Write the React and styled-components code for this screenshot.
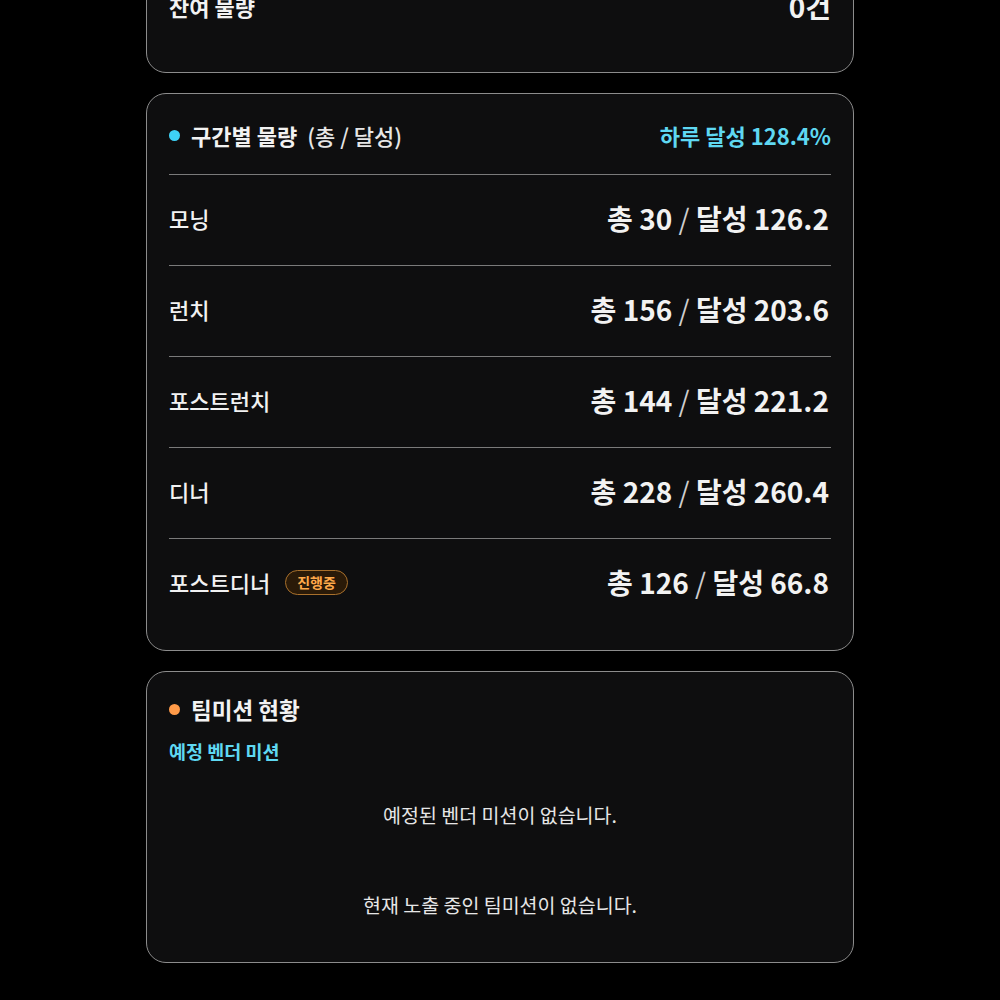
import styled, { createGlobalStyle } from "styled-components";

const GlobalStyle = createGlobalStyle({
  "html, body": {
    margin: 0,
    padding: 0,
    background: "#000",
  },
  body: {
    fontFamily: '"Noto Sans CJK KR", "Noto Sans", sans-serif',
    color: "#f2f2f2",
  },
});

const segments = [
  { name: "모닝", total: 30, done: "126.2" },
  { name: "런치", total: 156, done: "203.6" },
  { name: "포스트런치", total: 144, done: "221.2" },
  { name: "디너", total: 228, done: "260.4" },
  { name: "포스트디너", total: 126, done: "66.8", live: true },
];

const App = () => {
  return (
    <>
      <GlobalStyle />
      <Page>
        <Card $top="-42px" $bottom="41px">
          <SummaryRow>
            <span>잔여 물량</span>
            <strong>0건</strong>
          </SummaryRow>
        </Card>

        <Card $bottom="21px">
          <Header>
            <Title>
              <Dot $color="#3ed2f6" />
              구간별 물량 <small>(총 / 달성)</small>
            </Title>
            <Rate>하루 달성 128.4%</Rate>
          </Header>
          {segments.map((s) => (
            <Row key={s.name}>
              <Label>
                {s.name}
                {s.live && <Badge>진행중</Badge>}
              </Label>
              <Value>
                총 {s.total} <Slash>/</Slash> 달성 {s.done}
              </Value>
            </Row>
          ))}
        </Card>

        <Card $bottom="13px">
          <MissionTitle>
            <Dot $color="#ff9a48" />
            팀미션 현황
          </MissionTitle>
          <SubTitle>예정 벤더 미션</SubTitle>
          <Empty $first>예정된 벤더 미션이 없습니다.</Empty>
          <Empty>현재 노출 중인 팀미션이 없습니다.</Empty>
        </Card>
      </Page>
    </>
  );
};

const Page = styled.div({
  width: "708px",
  margin: "0 auto",
  display: "flex",
  flexDirection: "column",
  gap: "20px",
  paddingBottom: "40px",
});

const Card = styled.section(({ $top, $bottom }) => ({
  marginTop: $top || 0,
  background: "#0e0e0f",
  border: "1px solid #8c8c8c",
  borderRadius: "20px",
  padding: `22px 22px ${$bottom || "22px"}`,
}));

const SummaryRow = styled.div({
  display: "flex",
  justifyContent: "space-between",
  alignItems: "center",
  height: "50px",
  span: {
    fontSize: "22px",
    fontWeight: 700,
  },
  strong: {
    fontSize: "28px",
    fontWeight: 700,
  },
});

const Header = styled.div({
  display: "flex",
  justifyContent: "space-between",
  alignItems: "center",
  height: "38px",
  paddingBottom: "20px",
  borderBottom: "1px solid #7a7a7a",
});

const Title = styled.h2({
  margin: 0,
  display: "flex",
  alignItems: "center",
  fontSize: "22px",
  fontWeight: 700,
  whiteSpace: "pre",
  small: {
    fontSize: "22px",
    fontWeight: 500,
    color: "#e6e6e6",
    marginLeft: "5px",
  },
});

const Dot = styled.span(({ $color }) => ({
  width: "11px",
  height: "11px",
  borderRadius: "50%",
  background: $color,
  marginRight: "11px",
  flexShrink: 0,
}));

const Rate = styled.span({
  fontSize: "22px",
  fontWeight: 700,
  color: "#5fd8f2",
});

const Row = styled.div({
  display: "flex",
  justifyContent: "space-between",
  alignItems: "center",
  height: "86px",
  paddingBottom: "4px",
  borderBottom: "1px solid #7a7a7a",
  "&:last-child": {
    borderBottom: "none",
  },
});

const Label = styled.span({
  display: "flex",
  alignItems: "center",
  gap: "15px",
  fontSize: "22px",
  fontWeight: 500,
});

const Badge = styled.span({
  fontSize: "14px",
  fontWeight: 700,
  color: "#ffa94a",
  background: "#2a1a08",
  border: "1px solid #a8702c",
  borderRadius: "13px",
  padding: "1px 11px 2px",
  lineHeight: "20px",
});

const Value = styled.span({
  fontSize: "28px",
  fontWeight: 700,
  marginRight: "2px",
});

const Slash = styled.span({
  fontWeight: 400,
  color: "#cfcfcf",
});

const MissionTitle = styled.h2({
  margin: 0,
  display: "flex",
  alignItems: "center",
  height: "30px",
  fontSize: "22.5px",
  fontWeight: 700,
});

const SubTitle = styled.h3({
  margin: "14px 0 0",
  fontSize: "18.5px",
  fontWeight: 700,
  color: "#5fd8f2",
});

const Empty = styled.p(({ $first }) => ({
  margin: $first ? "5px 0 0" : 0,
  height: "90px",
  display: "flex",
  alignItems: "center",
  justifyContent: "center",
  fontSize: "19.5px",
  color: "#e6e6e6",
}));

export default App;
